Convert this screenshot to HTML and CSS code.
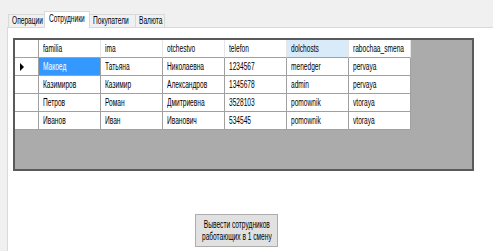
FILE: index.html
```html
<!DOCTYPE html>
<html lang="ru">

<head>
    <meta charset="UTF-8">
    <meta name="viewport" content="width=device-width, initial-scale=1.0">
    <link rel="stylesheet" href="styles.css">
    <title>Сотрудники</title>
</head>

<body>
    <div class="tabs">
        <div class="tab t1"><span class="txt">Операции</span></div>
        <div class="tab t2 active"><span class="txt">Сотрудники</span></div>
        <div class="tab t3"><span class="txt">Покупатели</span></div>
        <div class="tab t4"><span class="txt">Валюта</span></div>
    </div>

    <div class="tab-page">
        <div class="grid">
            <div class="grid-row header">
                <div class="cell row-head"></div>
                <div class="cell"><span class="txt">familia</span></div>
                <div class="cell"><span class="txt">ima</span></div>
                <div class="cell"><span class="txt">otchestvo</span></div>
                <div class="cell"><span class="txt">telefon</span></div>
                <div class="cell hover"><span class="txt">dolchosts</span></div>
                <div class="cell"><span class="txt">rabochaa_smena</span></div>
            </div>
            <div class="grid-row">
                <div class="cell row-head"><span class="arrow"></span></div>
                <div class="cell selected"><span class="txt">Макоед</span></div>
                <div class="cell"><span class="txt">Татьяна</span></div>
                <div class="cell"><span class="txt">Николаевна</span></div>
                <div class="cell"><span class="txt">1234567</span></div>
                <div class="cell"><span class="txt">menedger</span></div>
                <div class="cell"><span class="txt">pervaya</span></div>
            </div>
            <div class="grid-row">
                <div class="cell row-head"></div>
                <div class="cell"><span class="txt">Казимиров</span></div>
                <div class="cell"><span class="txt">Казимир</span></div>
                <div class="cell"><span class="txt">Александров</span></div>
                <div class="cell"><span class="txt">1345678</span></div>
                <div class="cell"><span class="txt">admin</span></div>
                <div class="cell"><span class="txt">pervaya</span></div>
            </div>
            <div class="grid-row">
                <div class="cell row-head"></div>
                <div class="cell"><span class="txt">Петров</span></div>
                <div class="cell"><span class="txt">Роман</span></div>
                <div class="cell"><span class="txt">Дмитриевна</span></div>
                <div class="cell"><span class="txt">3528103</span></div>
                <div class="cell"><span class="txt">pomownik</span></div>
                <div class="cell"><span class="txt">vtoraya</span></div>
            </div>
            <div class="grid-row">
                <div class="cell row-head"></div>
                <div class="cell"><span class="txt">Иванов</span></div>
                <div class="cell"><span class="txt">Иван</span></div>
                <div class="cell"><span class="txt">Иванович</span></div>
                <div class="cell"><span class="txt">534545</span></div>
                <div class="cell"><span class="txt">pomownik</span></div>
                <div class="cell"><span class="txt">vtoraya</span></div>
            </div>
        </div>

        <button class="shift-button"><span class="txt">Вывести сотрудников<br>работающих в 1 смену</span></button>
    </div>
</body>

</html>
```

FILE: styles.css
```css
body {
    margin: 0;
    height: 251px;
    overflow: hidden;
    background-color: #f0f0f0;
    font-family: "Liberation Sans", Arial, sans-serif;
    font-size: 10px;
    color: #000;
}

/* the screenshot's text is squeezed horizontally */
.txt {
    display: inline-block;
    white-space: nowrap;
    transform: scaleX(0.66);
    transform-origin: 0 50%;
}

.tabs {
    display: flex;
    align-items: flex-end;
    height: 27px;
    padding-left: 8px;
}

.tab {
    box-sizing: border-box;
    height: 13px;
    line-height: 12px;
    padding-left: 3px;
    border: 1px solid #d9d9d9;
    border-bottom: none;
    border-right: none;
    background-color: #f0f0f0;
}

.t1 { width: 36px; }
.t2 { width: 46px; }
.t3 { width: 45px; }
.t4 { width: 30px; border-right: 1px solid #d9d9d9; }

.tab.active {
    height: 17px;
    line-height: 14px;
    padding-left: 4px;
    border-right: 1px solid #d9d9d9;
    background-color: #fff;
    position: relative;
    top: 1px;
}

.tab.active + .tab {
    border-left: none;
}

.tab-page {
    margin-left: 7px;
    height: 224px;
    padding: 10px 0 0 5px;
    background-color: #fff;
    border-left: 1px solid #d9d9d9;
    border-top: 1px solid #d9d9d9;
}

.grid {
    width: 457px;
    height: 129px;
    background-color: #ababab;
    border: 2px solid #5a5a5a;
}

.grid-row {
    display: flex;
}

.cell {
    box-sizing: border-box;
    width: 62px;
    height: 18px;
    line-height: 17px;
    padding-left: 4px;
    background-color: #fff;
    border-right: 1px solid #a0a0a0;
    border-bottom: 1px solid #a0a0a0;
    overflow: hidden;
}

.header .cell {
    border-right-color: #e5e5e5;
}

.cell.row-head {
    width: 24px;
    display: flex;
    align-items: center;
    padding-left: 5px;
    border-right-color: #a0a0a0;
}

.hover {
    background-color: #d9ebf9;
}

.selected {
    background-color: #3399ff;
    color: #fff;
}

.arrow {
    width: 0;
    height: 0;
    border-top: 4px solid transparent;
    border-bottom: 4px solid transparent;
    border-left: 4px solid #000;
}

.shift-button {
    display: flex;
    align-items: center;
    justify-content: center;
    margin: 43px 0 0 182px;
    width: 83px;
    height: 33px;
    padding: 0;
    font-family: inherit;
    font-size: 10px;
    line-height: 12px;
    text-align: center;
    background-color: #e1e1e1;
    border: 1px solid #adadad;
    color: #000;
}

.shift-button .txt {
    flex-shrink: 0;
    transform-origin: 50% 50%;
}
```
